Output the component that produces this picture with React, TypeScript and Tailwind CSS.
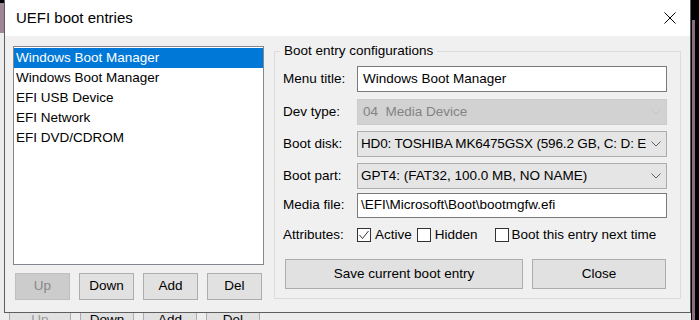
import React from 'react';

const entries = [
    'Windows Boot Manager',
    'Windows Boot Manager',
    'EFI USB Device',
    'EFI Network',
    'EFI DVD/CDROM',
];

const Chevron = ({ disabled }: { disabled?: boolean }) => (
    <svg width="10" height="6" viewBox="0 0 10 6" className="shrink-0 mr-[5px]">
        <polyline points="0.5,0.5 5,5 9.5,0.5" fill="none" stroke={disabled ? '#c4c4c4' : '#5f5f5f'} strokeWidth="1" />
    </svg>
);

const Check = ({ checked }: { checked?: boolean }) => (
    <span className="w-[14px] h-[14px] border border-[#333333] bg-white flex items-center justify-center shrink-0">
        {checked && (
            <svg width="12" height="12" viewBox="0 0 12 12">
                <polyline points="1.5,6 4.5,9.5 10.5,2" fill="none" stroke="#333333" strokeWidth="1" />
            </svg>
        )}
    </span>
);

const Row = ({ label, children, className }: { label: string; children: React.ReactNode; className: string }) => (
    <div className={`flex items-center ${className}`}>
        <span className="w-[74px] shrink-0">{label}</span>
        {children}
    </div>
);

const App = () => {
    return (
        <div className="relative w-[699px] h-[320px] overflow-hidden bg-black font-['Liberation_Sans',Arial,sans-serif] text-[13.5px] text-black">
            {/* desktop bits around the dialog */}
            <div className="absolute left-0 top-[3px] w-[4px] h-[30px] bg-[#9e8697]" />
            <div className="absolute left-[692px] top-[20px] w-[3px] h-[300px] bg-[#8a6d80]" />

            {/* window underneath */}
            <div className="absolute left-0 top-[33px] w-[691px] h-[287px] bg-[#ededed]">
                <div className="flex gap-[2px] pl-[9px] pt-[274px]">
                    {['Up', 'Down', 'Add', 'Del'].map((b, i) => (
                        <div
                            key={b}
                            className={`h-[27px] border border-[#adadad] bg-[#e1e1e1] flex items-center justify-center ${i === 0 ? 'w-[62px] text-[#9a9a9a]' : 'w-[54px] ml-[7px]'}`}
                        >
                            {b}
                        </div>
                    ))}
                </div>
            </div>

            {/* dialog */}
            <div className="absolute left-[4px] top-0 w-[687px] h-[313px] flex flex-col border-x border-b border-[#5e5e5e] bg-[#f0f0f0]">
                {/* title bar */}
                <div className="h-[36px] bg-white flex items-center justify-between pl-[11px] pr-[14px] shrink-0">
                    <span className="text-[15px]">UEFI boot entries</span>
                    <svg width="12" height="12" viewBox="0 0 12 12">
                        <path d="M0.5 0.5 L11.5 11.5 M11.5 0.5 L0.5 11.5" stroke="#000" strokeWidth="1" />
                    </svg>
                </div>

                <div className="flex flex-1 pl-[8px]">
                    {/* left column */}
                    <div className="flex flex-col pt-[10px] w-[251px] shrink-0">
                        <div className="h-[219px] border border-[#828790] bg-white pt-[1px]">
                            {entries.map((e, i) => (
                                <div
                                    key={i}
                                    className={`h-[20px] leading-[20px] pl-[2px] ${i === 0 ? 'bg-[#0078d7] text-white' : ''}`}
                                >
                                    {e}
                                </div>
                            ))}
                        </div>
                        <div className="flex gap-[9px] pl-[2px] mt-[8px]">
                            <button className="w-[55px] h-[27px] border border-[#bfbfbf] bg-[#cccccc] text-[#878787]">Up</button>
                            <button className="w-[55px] h-[27px] border border-[#adadad] bg-[#e1e1e1]">Down</button>
                            <button className="w-[55px] h-[27px] border border-[#adadad] bg-[#e1e1e1]">Add</button>
                            <button className="w-[55px] h-[27px] border border-[#adadad] bg-[#e1e1e1]">Del</button>
                        </div>
                    </div>

                    {/* configuration group */}
                    <fieldset className="ml-[10px] mt-[7px] w-[407px] h-[256px] border border-[#dcdcdc] px-[8px] pt-[7px]">
                        <legend className="-ml-[3px] px-[4px] leading-[16px]">Boot entry configurations</legend>

                        <Row label="Menu title:" className="">
                            <div className="w-[310px] h-[26px] border border-[#7a7a7a] bg-white flex items-center pl-[5px]">
                                Windows Boot Manager
                            </div>
                        </Row>

                        <Row label="Dev type:" className="mt-[7px]">
                            <div className="w-[310px] h-[26px] border border-[#cccccc] bg-[#d2d2d2] flex items-center text-[#838383]">
                                <span className="flex-1 pl-[5px] whitespace-pre">04  Media Device</span>
                                <Chevron disabled />
                            </div>
                        </Row>

                        <Row label="Boot disk:" className="mt-[6px]">
                            <div className="w-[310px] h-[26px] border border-[#adadad] bg-[#e5e5e5] flex items-center">
                                <span className="flex-1 pl-[3px] mr-[5px] overflow-hidden whitespace-nowrap tracking-[-0.15px]">
                                    HD0: TOSHIBA MK6475GSX (596.2 GB, C: D: E:)
                                </span>
                                <Chevron />
                            </div>
                        </Row>

                        <Row label="Boot part:" className="mt-[6px]">
                            <div className="w-[310px] h-[26px] border border-[#adadad] bg-[#e5e5e5] flex items-center">
                                <span className="flex-1 pl-[3px] whitespace-nowrap">GPT4: (FAT32, 100.0 MB, NO NAME)</span>
                                <Chevron />
                            </div>
                        </Row>

                        <Row label="Media file:" className="mt-[4px]">
                            <div className="w-[310px] h-[25px] border border-[#7a7a7a] bg-white flex items-center pl-[3px]">
                                {'\\EFI\\Microsoft\\Boot\\bootmgfw.efi'}
                            </div>
                        </Row>

                        <Row label="Attributes:" className="mt-[9px] h-[16px]">
                            <Check checked />
                            <span className="ml-[4px]">Active</span>
                            <span className="ml-[5px]"><Check /></span>
                            <span className="ml-[4px]">Hidden</span>
                            <span className="ml-[17px]"><Check /></span>
                            <span className="ml-[3px]">Boot this entry next time</span>
                        </Row>

                        <div className="flex gap-[9px] ml-[2px] mt-[16px]">
                            <button className="w-[238px] h-[30px] border border-[#adadad] bg-[#e1e1e1]">Save current boot entry</button>
                            <button className="w-[134px] h-[30px] border border-[#adadad] bg-[#e1e1e1]">Close</button>
                        </div>
                    </fieldset>
                </div>
            </div>
        </div>
    );
};

export default App;
